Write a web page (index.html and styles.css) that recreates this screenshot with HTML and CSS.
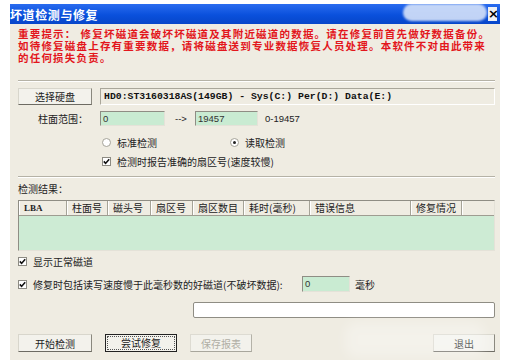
FILE: index.html
```html
<!DOCTYPE html>
<html>
<head>
    <title>坏道检测与修复</title>
    <link rel="stylesheet" href="styles.css">
</head>
<body>
    <div class="window">
        <div class="titlebar">
            <span class="title">坏道检测与修复</span>
            <span class="glare"></span>
            <span class="close">×</span>
        </div>
        <div class="content">
            <p class="warning">重要提示： 修复坏磁道会破坏坏磁道及其附近磁道的数据。请在修复前首先做好数据备份。<br>如待修复磁盘上存有重要数据，请将磁盘送到专业数据恢复人员处理。本软件不对由此带来<br>的任何损失负责。</p>

            <div class="sep"></div>

            <div class="row disk-row">
                <button class="btn btn-wide">选择硬盘</button>
                <div class="disk-field">HD0:ST3160318AS(149GB) - Sys(C:) Per(D:) Data(E:)</div>
            </div>

            <div class="row range-row">
                <span class="label">柱面范围：</span>
                <div class="input range-from">0</div>
                <span class="arrow">--&gt;</span>
                <div class="input range-to">19457</div>
                <span class="hint">0-19457</span>
            </div>

            <div class="row opts">
                <span class="opt opt-first"><span class="radio"></span>标准检测</span>
                <span class="opt"><span class="radio checked"></span>读取检测</span>
            </div>

            <div class="row opts check-row">
                <span class="opt"><span class="check"><svg width="7" height="7" viewBox="0 0 7 7"><polyline points="0.8,3.4 2.6,5.4 6.2,1.2" fill="none" stroke="#111" stroke-width="1.6"/></svg></span>检测时报告准确的扇区号(速度较慢)</span>
            </div>

            <div class="sep sep-2"></div>

            <div class="result-label">检测结果：</div>

            <div class="table">
                <div class="thead">
                    <span class="th th-lba">LBA</span>
                    <span class="th">柱面号</span>
                    <span class="th">磁头号</span>
                    <span class="th">扇区号</span>
                    <span class="th">扇区数目</span>
                    <span class="th">耗时(毫秒)</span>
                    <span class="th">错误信息</span>
                    <span class="th">修复情况</span>
                    <span class="th th-last"></span>
                </div>
                <div class="tbody"></div>
            </div>

            <div class="row show-row">
                <span class="opt"><span class="check"><svg width="7" height="7" viewBox="0 0 7 7"><polyline points="0.8,3.4 2.6,5.4 6.2,1.2" fill="none" stroke="#111" stroke-width="1.6"/></svg></span>显示正常磁道</span>
            </div>

            <div class="row slow-row">
                <span class="opt slow-label"><span class="check"><svg width="7" height="7" viewBox="0 0 7 7"><polyline points="0.8,3.4 2.6,5.4 6.2,1.2" fill="none" stroke="#111" stroke-width="1.6"/></svg></span>修复时包括读写速度慢于此毫秒数的好磁道(不破坏数据):</span>
                <div class="input ms-input">0</div>
                <span class="ms">毫秒</span>
            </div>

            <div class="status-field"></div>

            <div class="row buttons">
                <button class="btn btn-wide">开始检测</button>
                <button class="btn btn-focus"><span>尝试修复</span></button>
                <button class="btn btn-small" disabled>保存报表</button>
                <button class="btn btn-small btn-exit">退出</button>
            </div>
        </div>
        <span class="haze"></span>
    </div>
</body>
</html>
```

FILE: styles.css
```css
body {
    margin: 0;
    background: #fff;
    font-family: "Noto Sans CJK SC", "Noto Sans", sans-serif;
    font-size: 10px;
    color: #222;
}
.window {
    position: relative;
    margin: 4px 0 0 10px;
    width: 490px;
    height: 356px;
    background: #efece2;
    overflow: hidden;
}
.titlebar {
    position: relative;
    display: flex;
    align-items: center;
    height: 20px;
    background: linear-gradient(#2a6cef, #0a50dc 55%, #0746c9);
}
.title {
    color: #fff;
    font-weight: bold;
    font-size: 12px;
    letter-spacing: 0.6px;
}
.glare {
    position: absolute;
    left: 393px;
    top: 0;
    width: 84px;
    height: 17px;
    border-radius: 9px;
    background: rgba(214, 226, 248, 0.9);
    filter: blur(1px);
}
.close {
    position: relative;
    margin-left: auto;
    margin-right: 3px;
    width: 9px;
    height: 14px;
    background: #eef0f4;
    color: #000;
    font: bold 13px/14px "DejaVu Sans", sans-serif;
    text-align: center;
}
.content {
    padding: 5px 5px 0 8px;
}
.warning {
    margin: 0;
    color: #e3161c;
    font-family: "Liberation Sans", "Noto Sans CJK SC", sans-serif;
    font-weight: bold;
    font-size: 10.5px;
    line-height: 11.8px;
    letter-spacing: 1.2px;
    white-space: nowrap;
}
.sep {
    margin-top: 16px;
    border-top: 1px solid #b5b2a6;
    border-bottom: 1px solid #fff;
}
.sep-2 {
    margin-top: 7px;
}
.row {
    display: flex;
    align-items: center;
}
.btn {
    height: 17px;
    padding: 0;
    font: inherit;
    color: #222;
    background: #f3f2ec;
    border: 1px solid;
    border-color: #d8d6cc #8a887e #6d6b63 #d8d6cc;
}
.btn-wide {
    width: 74px;
}
.disk-row {
    margin-top: 6px;
    height: 17px;
    gap: 8px;
}
.disk-field {
    flex: 1;
    height: 17px;
    box-sizing: border-box;
    padding-left: 3px;
    border: 1px solid;
    border-color: #a9a69a #fff #fff #a9a69a;
    font: bold 9.8px/15px "Liberation Mono", monospace;
    color: #111;
}
.range-row {
    margin-top: 6px;
    height: 15px;
}
.label {
    width: 70px;
    margin-right: 12px;
    text-align: right;
}
.input {
    height: 15px;
    box-sizing: border-box;
    padding-left: 2px;
    background: #c9ebd2;
    border: 1px solid;
    border-color: #8f8d84 #e4e2d8 #e4e2d8 #8f8d84;
    font: 9.5px/13px "Liberation Sans", sans-serif;
    color: #333;
}
.range-from {
    width: 65px;
}
.range-to {
    width: 63px;
}
.arrow {
    width: 20px;
    margin: 0 0 0 10px;
    font: 9.5px "Liberation Sans", sans-serif;
}
.hint {
    margin-left: 7px;
    font: 9.5px "Liberation Sans", sans-serif;
}
.opts {
    margin-top: 8px;
    height: 16px;
    padding-left: 84px;
}
.check-row {
    margin-top: 3px;
}
.opt {
    display: flex;
    align-items: center;
    gap: 6px;
    white-space: nowrap;
}
.opt-first {
    width: 128px;
}
.radio {
    width: 7px;
    height: 7px;
    border: 1px solid #a5a399;
    border-radius: 50%;
    background: #fff;
    position: relative;
}
.radio.checked::after {
    content: "";
    position: absolute;
    left: 2px;
    top: 2px;
    width: 3px;
    height: 3px;
    border-radius: 50%;
    background: #222;
}
.check {
    display: flex;
    align-items: center;
    justify-content: center;
    width: 7px;
    height: 7px;
    border: 1px solid #8d8b83;
    background: #fff;
}
.result-label {
    margin-top: 4px;
    height: 14px;
    line-height: 14px;
}
.table {
    margin-top: 4px;
    border: 1px solid;
    border-color: #8f8d84 #e4e2d8 #e4e2d8 #8f8d84;
}
.thead {
    display: grid;
    grid-template-columns: 48px 41px 43px 42px 51px 66px 101px 51px 1fr;
    height: 14px;
    border-bottom: 1px solid #9e9c91;
}
.th {
    padding-left: 4px;
    line-height: 14px;
    border-right: 1px solid #a5a397;
    border-left: 1px solid #fff;
    white-space: nowrap;
    overflow: hidden;
}
.th-lba {
    font: bold 9px/14px "Liberation Serif", serif;
}
.th-last {
    border-right: none;
}
.tbody {
    height: 34px;
    background: #cdebd4;
}
.show-row {
    margin-top: 2px;
    height: 16px;
}
.slow-row {
    margin-top: 7px;
    height: 16px;
}
.slow-label {
    width: 284px;
}
.ms-input {
    width: 48px;
    height: 16px;
}
.ms {
    margin-left: 5px;
}
.status-field {
    margin: 10px 0 0 175px;
    height: 16px;
    box-sizing: border-box;
    background: #fff;
    border: 1px solid #8f8d84;
    border-radius: 2px;
}
.buttons {
    margin-top: 16px;
    height: 18px;
}
.buttons .btn {
    height: 18px;
}
.btn-focus {
    width: 72px;
    margin-left: 13px;
    border: 1px solid #222;
    padding: 1px;
}
.btn-focus span {
    display: block;
    height: 100%;
    box-sizing: border-box;
    border: 1px dotted #555;
    line-height: 12px;
}
.btn-small {
    width: 62px;
    margin-left: 13px;
}
.btn[disabled] {
    color: #b0aea4;
    border-color: #dddbd2 #b4b2a8 #a8a69c #dddbd2;
}
.btn-exit {
    margin-left: auto;
}
.haze {
    position: absolute;
    left: 335px;
    top: 318px;
    width: 140px;
    height: 36px;
    border-radius: 12px;
    background: rgba(255, 255, 255, 0.3);
    filter: blur(6px);
}
```
